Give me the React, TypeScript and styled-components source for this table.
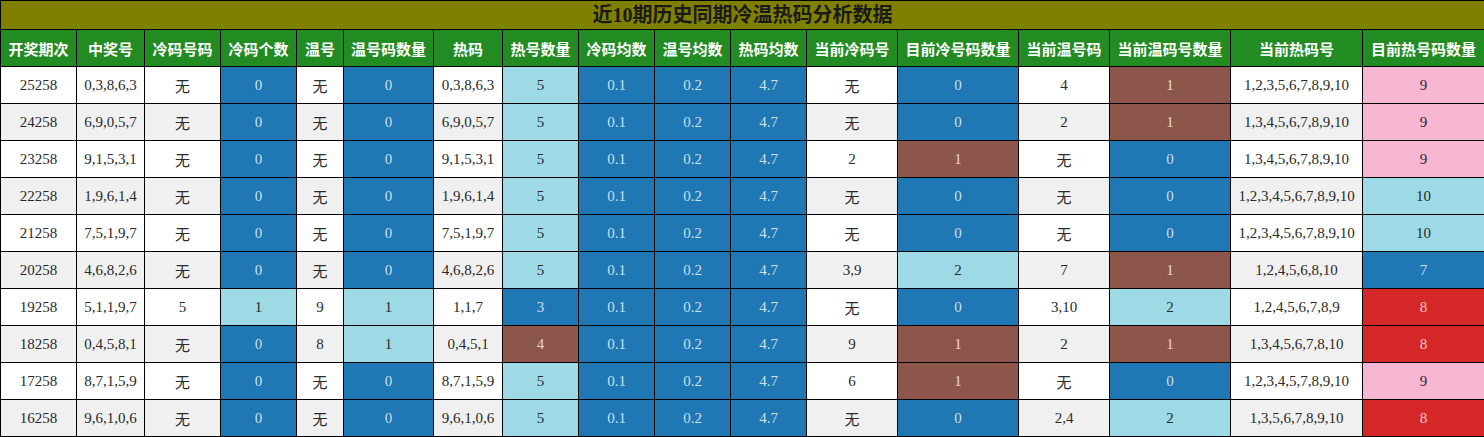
import React from "react";
import styled, { createGlobalStyle } from "styled-components";

const GlobalStyle = createGlobalStyle`
  html, body { margin: 0; padding: 0; background: #fff; }
  body { font-family: "Liberation Serif", "Noto Sans CJK SC", serif; }
`;

type Tone = "blue" | "cyan" | "brown" | "pink" | "red";

const toneBg: Record<Tone, string> = {
  blue: "#1f77b4",
  cyan: "#9edae5",
  brown: "#8c564b",
  pink: "#f7b6d2",
  red: "#d62728",
};

const darkTones: Tone[] = ["blue", "brown", "red"];

const Table = styled.table`
  border-collapse: collapse;
  table-layout: fixed;
  width: 1484px;
  font-family: "Liberation Serif", "Noto Sans CJK SC", serif;
`;

const TitleCell = styled.th`
  height: 28px;
  padding: 0;
  background: #808000;
  color: #1a1a1a;
  font-size: 20px;
  font-weight: bold;
  border: 1px solid #000;
  text-align: center;
  line-height: 26px;
`;

const HeadCell = styled.th`
  height: 36px;
  padding: 0;
  background: #228b22;
  color: #fff;
  font-size: 15px;
  font-weight: bold;
  border: 1px solid #000;
  text-align: center;
  white-space: nowrap;
  overflow: hidden;
`;

const Row = styled.tr<{ $alt: boolean }>`
  background: ${(p) => (p.$alt ? "#f0f0f0" : "#fff")};
`;

const Cell = styled.td<{ $tone?: Tone }>`
  height: 36px;
  padding: 0;
  border: 1px solid #000;
  text-align: center;
  font-size: 15px;
  white-space: nowrap;
  overflow: hidden;
  background: ${(p) => (p.$tone ? toneBg[p.$tone] : "transparent")};
  color: ${(p) =>
    p.$tone && darkTones.includes(p.$tone) ? "rgba(255,255,255,0.78)" : "#2a2a2a"};
`;

const widths = [76, 68, 76, 76, 47, 90, 69, 76, 76, 76, 76, 91, 121, 91, 121, 132, 122];

const headers = [
  "开奖期次", "中奖号", "冷码号码", "冷码个数", "温号", "温号码数量", "热码", "热号数量",
  "冷码均数", "温号均数", "热码均数", "当前冷码号", "目前冷号码数量", "当前温号码",
  "当前温码号数量", "当前热码号", "目前热号码数量",
];

type C = string | [string, Tone];

const B = (v: string): C => [v, "blue"];
const Cy = (v: string): C => [v, "cyan"];
const Br = (v: string): C => [v, "brown"];
const P = (v: string): C => [v, "pink"];
const R = (v: string): C => [v, "red"];

const avg: C[] = [B("0.1"), B("0.2"), B("4.7")];

const rows: C[][] = [
  ["25258", "0,3,8,6,3", "无", B("0"), "无", B("0"), "0,3,8,6,3", Cy("5"), ...avg, "无", B("0"), "4", Br("1"), "1,2,3,5,6,7,8,9,10", P("9")],
  ["24258", "6,9,0,5,7", "无", B("0"), "无", B("0"), "6,9,0,5,7", Cy("5"), ...avg, "无", B("0"), "2", Br("1"), "1,3,4,5,6,7,8,9,10", P("9")],
  ["23258", "9,1,5,3,1", "无", B("0"), "无", B("0"), "9,1,5,3,1", Cy("5"), ...avg, "2", Br("1"), "无", B("0"), "1,3,4,5,6,7,8,9,10", P("9")],
  ["22258", "1,9,6,1,4", "无", B("0"), "无", B("0"), "1,9,6,1,4", Cy("5"), ...avg, "无", B("0"), "无", B("0"), "1,2,3,4,5,6,7,8,9,10", Cy("10")],
  ["21258", "7,5,1,9,7", "无", B("0"), "无", B("0"), "7,5,1,9,7", Cy("5"), ...avg, "无", B("0"), "无", B("0"), "1,2,3,4,5,6,7,8,9,10", Cy("10")],
  ["20258", "4,6,8,2,6", "无", B("0"), "无", B("0"), "4,6,8,2,6", Cy("5"), ...avg, "3,9", Cy("2"), "7", Br("1"), "1,2,4,5,6,8,10", B("7")],
  ["19258", "5,1,1,9,7", "5", Cy("1"), "9", Cy("1"), "1,1,7", B("3"), ...avg, "无", B("0"), "3,10", Cy("2"), "1,2,4,5,6,7,8,9", R("8")],
  ["18258", "0,4,5,8,1", "无", B("0"), "8", Cy("1"), "0,4,5,1", Br("4"), ...avg, "9", Br("1"), "2", Br("1"), "1,3,4,5,6,7,8,10", R("8")],
  ["17258", "8,7,1,5,9", "无", B("0"), "无", B("0"), "8,7,1,5,9", Cy("5"), ...avg, "6", Br("1"), "无", B("0"), "1,2,3,4,5,7,8,9,10", P("9")],
  ["16258", "9,6,1,0,6", "无", B("0"), "无", B("0"), "9,6,1,0,6", Cy("5"), ...avg, "无", B("0"), "2,4", Cy("2"), "1,3,5,6,7,8,9,10", R("8")],
];

export default function App() {
  return (
    <>
      <GlobalStyle />
      <Table>
        <colgroup>
          {widths.map((w, i) => (
            <col key={i} style={{ width: w }} />
          ))}
        </colgroup>
        <thead>
          <tr>
            <TitleCell colSpan={17}>近10期历史同期冷温热码分析数据</TitleCell>
          </tr>
          <tr>
            {headers.map((h) => (
              <HeadCell key={h}>{h}</HeadCell>
            ))}
          </tr>
        </thead>
        <tbody>
          {rows.map((r, ri) => (
            <Row key={ri} $alt={ri % 2 === 1}>
              {r.map((c, ci) =>
                typeof c === "string" ? (
                  <Cell key={ci}>{c}</Cell>
                ) : (
                  <Cell key={ci} $tone={c[1]}>
                    {c[0]}
                  </Cell>
                )
              )}
            </Row>
          ))}
        </tbody>
      </Table>
    </>
  );
}
